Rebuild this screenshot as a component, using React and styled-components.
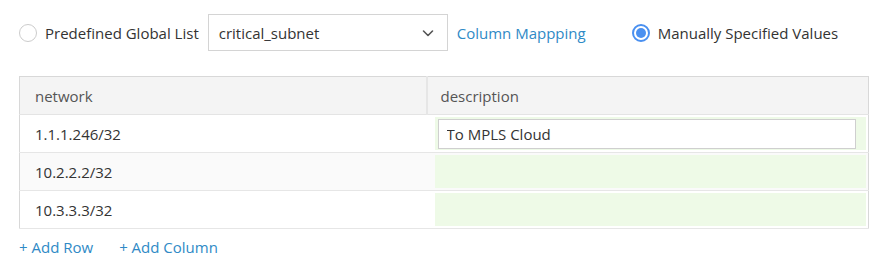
import React, { useState } from 'react';
import styled, { createGlobalStyle } from 'styled-components';

const GlobalStyle = createGlobalStyle`
  body {
    margin: 0;
    background: #fff;
    font-family: "Open Sans", "Liberation Sans", sans-serif;
    color: #333;
  }
`;

const Wrapper = styled.div`
  padding: 14px 8px 0 19px;
  width: 850px;
`;

const SourceBar = styled.div`
  display: flex;
  align-items: center;
  height: 37px;
`;

const RadioLabel = styled.label`
  display: flex;
  align-items: center;
  font-size: 15px;
  color: #333;
  cursor: pointer;
  margin-left: ${p => p.offset || 0}px;
`;

const RadioDot = styled.span`
  width: 18px;
  height: 18px;
  box-sizing: border-box;
  border-radius: 50%;
  border: ${p => (p.checked ? '2px solid #4a90f0' : '1px solid #ccc')};
  margin-right: 8px;
  display: flex;
  align-items: center;
  justify-content: center;

  &::after {
    content: '';
    display: ${p => (p.checked ? 'block' : 'none')};
    width: 10px;
    height: 10px;
    border-radius: 50%;
    background: #4a90f0;
  }
`;

const Select = styled.div`
  margin-left: 9px;
  width: 240px;
  height: 37px;
  box-sizing: border-box;
  border: 1px solid #d4d4d4;
  display: flex;
  align-items: center;
  justify-content: space-between;
  padding: 0 12px 0 10px;
  font-size: 15px;
  color: #333;

  svg {
    width: 14px;
    height: 14px;
  }
`;

const Link = styled.a`
  color: #2f8ac6;
  font-size: 15px;
  text-decoration: none;
  cursor: pointer;
  margin-left: ${p => p.offset || 0}px;
`;

const Grid = styled.table`
  margin-top: 25px;
  width: 850px;
  border-collapse: collapse;
  border: 1px solid #d8d8d8;
  font-size: 15px;
  table-layout: fixed;
`;

const HeadCell = styled.th`
  background: #f4f4f4;
  height: 37px;
  padding: 0 0 0 ${p => (p.divided ? 13 : 15)}px;
  text-align: left;
  font-weight: normal;
  color: #555;
  border-bottom: 1px solid #e4e4e4;
  border-left: ${p => (p.divided ? '2px solid #e6e6e6' : 'none')};
`;

const Row = styled.tr`
  background: ${p => (p.striped ? '#fafafa' : '#fff')};
  border-bottom: 1px solid #e6e6e6;
`;

const Cell = styled.td`
  padding: 0 0 0 15px;
  color: #333;
`;

const EditCell = styled.td`
  padding: 2px 2px 2px 8px;
`;

const GreenBox = styled.div`
  background: #eefae7;
  height: 33px;
  display: flex;
  align-items: center;
  padding: 0 10px 0 3px;
`;

const TextInput = styled.input`
  width: 100%;
  height: 30px;
  box-sizing: border-box;
  border: 1px solid #cfcfcf;
  padding: 0 8px;
  font-family: inherit;
  font-size: 15px;
  color: #333;
  outline: none;
`;

const Actions = styled.div`
  margin-top: 8px;
  display: flex;
`;

const rows = [
  { network: '1.1.1.246/32', description: 'To MPLS Cloud', editing: true },
  { network: '10.2.2.2/32', description: '' },
  { network: '10.3.3.3/32', description: '' },
];

const Chevron = () => (
  <svg viewBox="0 0 14 14" fill="none" stroke="#555" strokeWidth="1.6" strokeLinecap="round" strokeLinejoin="round">
    <path d="M2.5 5l4.5 4.5L11.5 5" />
  </svg>
);

const App = () => {
  const [mode, setMode] = useState('manual');
  const [data, setData] = useState(rows);

  return (
    <Wrapper>
      <GlobalStyle />
      <SourceBar>
        <RadioLabel onClick={() => setMode('global')}>
          <RadioDot checked={mode === 'global'} />
          Predefined Global List
        </RadioLabel>
        <Select>
          critical_subnet
          <Chevron />
        </Select>
        <Link offset={9}>Column Mappping</Link>
        <RadioLabel offset={46} onClick={() => setMode('manual')}>
          <RadioDot checked={mode === 'manual'} />
          Manually Specified Values
        </RadioLabel>
      </SourceBar>

      <Grid>
        <colgroup>
          <col style={{ width: 407 }} />
          <col />
        </colgroup>
        <thead>
          <tr>
            <HeadCell>network</HeadCell>
            <HeadCell divided>description</HeadCell>
          </tr>
        </thead>
        <tbody>
          {data.map((r, i) => (
            <Row key={i} striped={i % 2 === 1}>
              <Cell>{r.network}</Cell>
              <EditCell>
                <GreenBox>
                  {r.editing ? (
                    <TextInput
                      value={r.description}
                      onChange={e => {
                        const next = [...data];
                        next[i] = { ...r, description: e.target.value };
                        setData(next);
                      }}
                    />
                  ) : null}
                </GreenBox>
              </EditCell>
            </Row>
          ))}
        </tbody>
      </Grid>

      <Actions>
        <Link>+ Add Row</Link>
        <Link offset={26}>+ Add Column</Link>
      </Actions>
    </Wrapper>
  );
};

export default App;
